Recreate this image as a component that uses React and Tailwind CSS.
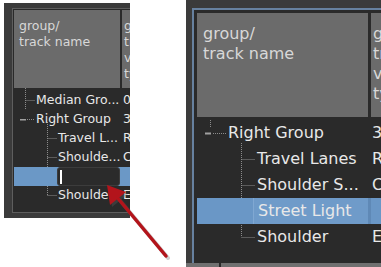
const leftRows = [
  { name: "Median Gro...", value: "0", indent: 22 },
  { name: "Right Group", value: "3", indent: 22 },
  { name: "Travel L...", value: "R", indent: 44 },
  { name: "Shoulde...", value: "C", indent: 44 },
  { edit: true, value: "", indent: 44 },
  { name: "Shoulder", value: "E", indent: 44 },
];

const rightRows = [
  { name: "Right Group", value: "3", indent: 31 },
  { name: "Travel Lanes", value: "R", indent: 60 },
  { name: "Shoulder S...", value: "C", indent: 60 },
  { name: "Street Light", value: "", indent: 60, selected: true },
  { name: "Shoulder", value: "E", indent: 60 },
];

const dots = { stroke: "#8c8c8c", strokeWidth: 1, strokeDasharray: "1 1", fill: "none" };

const LeftTree = () => (
  <svg className="absolute left-0 top-0 overflow-visible" width="60" height="110">
    <path d="M11.5 -3 V19 M11.5 9.5 H21 M13 28.5 H21 M33.5 31 V105 M33.5 47.5 H43 M33.5 66.5 H43 M33.5 104.5 H43" {...dots} />
    <rect x="6" y="28" width="6" height="1.5" fill="#a0a0a0" />
  </svg>
);

const RightTree = () => (
  <svg className="absolute left-0 top-0 overflow-visible" width="70" height="130">
    <path d="M13.5 0 V8 M16 13.5 H29 M44.5 23 V117 M44.5 39.5 H58 M44.5 65.5 H58 M44.5 117.5 H58" {...dots} />
    <rect x="8" y="12.5" width="6" height="2" fill="#a0a0a0" />
  </svg>
);

const LeftPanel = () => (
  <div className="mt-[3px] ml-[4px] w-[126px] h-[215px] shrink-0 bg-[#3b3b3b] overflow-hidden pt-[5px] pl-[8px]">
    <div className="w-[200px] h-[205px] border border-[#5e5e5e] p-[1px] bg-[#2a2a2a]">
      <div className="flex h-[78px] gap-[2px] text-[12.5px] leading-[16px] text-[#d8d8d8]">
        <div className="w-[106px] bg-[#6b6b6b] pl-[5px] pt-[8px]">
          group/
          <br />
          track name
        </div>
        <div className="flex-1 bg-[#6b6b6b] pl-[2px] pt-[8px] overflow-hidden">
          group/
          <br />
          track
          <br />
          value
          <br />
          type
        </div>
      </div>
      <div className="relative mt-[3px] text-[12.5px] text-[#e8e8e8]">
        <LeftTree />
        {leftRows.map((r, i) => (
          <div key={i} className={`relative flex h-[19px] items-center ${r.edit ? "bg-[#6b98c6]" : ""}`}>
            <div className="w-[106px] shrink-0 whitespace-nowrap overflow-hidden" style={{ paddingLeft: r.indent }}>
              {r.edit ? (
                <div className="flex items-center w-[63px] h-[19px] -ml-[1px] rounded-[3px] bg-[#2b2b2b] border border-[#3c3c3c] pl-[2px]">
                  <div className="w-[2px] h-[14px] bg-white" />
                </div>
              ) : (
                r.name
              )}
            </div>
            <div className="w-[2px] shrink-0" />
            <div className="pl-[1px] whitespace-nowrap">{r.value}</div>
          </div>
        ))}
      </div>
    </div>
  </div>
);

const RightPanel = () => (
  <div className="ml-[56px] w-[195px] h-[267px] shrink-0 bg-[#3b3b3b] overflow-hidden flex flex-col">
    <div className="h-[263px] pt-[8px] pl-[6px]">
      <div className="w-[300px] h-[255px] border-l-2 border-t-2 border-[#67819f] p-[3px] bg-[#2a2a2a]">
        <div className="flex h-[104px] gap-[3px] text-[16px] leading-[20px] text-[#d8d8d8]">
          <div className="w-[171px] bg-[#6b6b6b] pl-[6px] pt-[11px]">
            group/
            <br />
            track name
          </div>
          <div className="flex-1 bg-[#6b6b6b] pl-[2px] pt-[11px] overflow-hidden">
            group/
            <br />
            track
            <br />
            value
            <br />
            type
          </div>
        </div>
        <div className="relative mt-[3px] text-[16px] text-[#e8e8e8]">
          <RightTree />
          {rightRows.map((r, i) => (
            <div key={i} className={`relative flex h-[26px] items-center ${r.selected ? "bg-[#6a97c6]" : ""}`}>
              <div className="w-[171px] shrink-0 h-full flex items-center whitespace-nowrap overflow-hidden" style={{ paddingLeft: r.indent }}>
                {r.selected ? (
                  <div className="h-full flex items-center -ml-[4px] pl-[4px] w-[115px] bg-[#6f9bc9] border-l border-[#80a8d2]">
                    {r.name}
                  </div>
                ) : (
                  r.name
                )}
              </div>
              <div className={`w-[3px] h-full shrink-0 ${r.selected ? "bg-[#5f89b6]" : ""}`} />
              <div className="pl-[1px] whitespace-nowrap">{r.value}</div>
            </div>
          ))}
        </div>
      </div>
    </div>
    <div className="h-[4px] bg-[#707070] flex">
      <div className="w-[33px]" />
      <div className="w-[2px] bg-[#2a2a2a]" />
    </div>
  </div>
);

const Arrow = () => (
  <svg className="absolute left-0 top-0 pointer-events-none" width="381" height="267">
    <g opacity="0.3" transform="translate(2 2)">
      <path d="M116 196 L166 256" stroke="#666" strokeWidth="4" strokeLinecap="round" />
      <polygon points="107,185 126,192 110,205" fill="#666" />
    </g>
    <path d="M116 196 L166 256" stroke="#b3141b" strokeWidth="3.5" strokeLinecap="round" />
    <polygon points="107,185 126,192 110,205" fill="#b3141b" />
  </svg>
);

export default function App() {
  return (
    <div className="relative w-[381px] h-[267px] bg-white overflow-hidden flex items-start font-['DejaVu_Sans',sans-serif]">
      <LeftPanel />
      <RightPanel />
      <Arrow />
    </div>
  );
}
